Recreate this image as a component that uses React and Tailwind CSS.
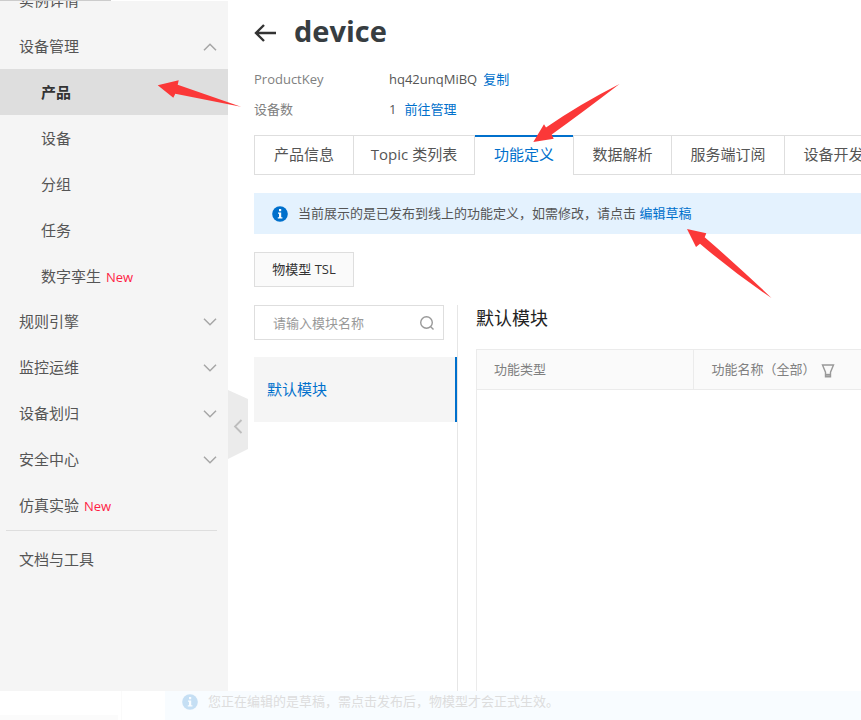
import React from "react";

function Chevron({ up = false }) {
  return (
    <svg className="h-2 w-[14px]" viewBox="0 0 14 8" fill="none" stroke="#a6a6a6" strokeWidth="1.5" aria-hidden="true">
      <path d={up ? "M1 7.2 7 1.2l6 6" : "M1 .8l6 6 6-6"} />
    </svg>
  );
}

function NewTag() {
  return <span className="ml-[5px] text-[13px] text-[#ff1e46]">New</span>;
}

function MenuRow({ label, isNew, expandable, open }) {
  return (
    <button type="button" className="flex h-[46px] w-full items-center justify-between pr-[11px] pb-px pl-[19px] text-left">
      <span>
        {label}
        {isNew && <NewTag />}
      </span>
      {expandable && <Chevron up={open} />}
    </button>
  );
}

function SubRow({ label, isNew, active }) {
  return (
    <a
      href="#"
      aria-current={active ? "page" : undefined}
      className={
        active
          ? "flex h-[46px] items-center bg-[#dedede] pl-[41px] font-bold text-[#333333]"
          : "flex h-[46px] items-center pl-[41px]"
      }
    >
      <span>
        {label}
        {isNew && <NewTag />}
      </span>
    </a>
  );
}

function Sidebar() {
  return (
    <aside className="relative w-[228px] shrink-0 bg-[#f5f5f5]">
      <div className="h-full overflow-hidden">
        <nav className="-mt-[23px] text-[15px] text-[#555555]">
          <MenuRow label="实例详情" />
          <MenuRow label="设备管理" expandable open />
          <div className="-mt-px">
            <SubRow label="产品" active />
            <SubRow label="设备" />
            <SubRow label="分组" />
            <SubRow label="任务" />
            <SubRow label="数字孪生" isNew />
          </div>
          <MenuRow label="规则引擎" expandable />
          <MenuRow label="监控运维" expandable />
          <MenuRow label="设备划归" expandable />
          <MenuRow label="安全中心" expandable />
          <MenuRow label="仿真实验" isNew />
          <hr className="mt-px mr-[11px] mb-[6px] ml-[6px] border-[#dedede]" />
          <MenuRow label="文档与工具" />
        </nav>
      </div>
      <button type="button" aria-label="收起菜单" className="absolute top-[389px] left-full">
        <svg className="h-[69px] w-5" viewBox="0 0 20 69" fill="none">
          <path d="M0 0 20 9v50L0 69z" fill="#ebebeb" />
          <path d="M13.5 30 7 36.5l6.500 6.500" stroke="#bdbdbd" strokeWidth="1.8" />
        </svg>
      </button>
    </aside>
  );
}

function InfoIcon() {
  return (
    <svg className="size-4 shrink-0" viewBox="0 0 16 16" aria-hidden="true">
      <circle cx="8" cy="8" r="7.800" fill="#0070cc" />
      <path d="M7 3h2.200v2.200H7zM6 6.500h3.200v4.700h1.200v1.300H5.800v-1.300H7V7.800H6z" fill="#fff" />
    </svg>
  );
}

const TAB = "h-10 shrink-0 border-y border-l border-[#dedede] pb-px text-[15px] text-[#555555]";

function Tabs() {
  return (
    <div role="tablist" className="mt-[11px] flex overflow-hidden">
      <button type="button" role="tab" className={TAB + " w-[99px]"}>产品信息</button>
      <button type="button" role="tab" className={TAB + " w-[122px] border-r"}>Topic 类列表</button>
      <button
        type="button"
        role="tab"
        aria-selected="true"
        className="h-10 w-[98px] shrink-0 border-t-2 border-[#0070cc] pb-[3px] text-[15px] text-[#0070cc]"
      >
        功能定义
      </button>
      <button type="button" role="tab" className={TAB + " w-[98px]"}>数据解析</button>
      <button type="button" role="tab" className={TAB + " w-[113px]"}>服务端订阅</button>
      <button type="button" role="tab" className={TAB + " w-[98px]"}>设备开发</button>
    </div>
  );
}

function ModulePanel() {
  return (
    <section className="w-[204px] shrink-0 border-r border-[#e6e6e6]">
      <label className="mr-[13px] flex h-[35px] items-center border border-[#dedede] pr-2 pl-[18px]">
        <span className="sr-only">模块名称</span>
        <input
          type="text"
          placeholder="请输入模块名称"
          className="h-full w-full min-w-0 text-[13px] outline-none placeholder:text-[#999999]"
        />
        <svg className="size-4 shrink-0" viewBox="0 0 16 16" fill="none" stroke="#999999" strokeWidth="1.400" aria-hidden="true">
          <circle cx="7.500" cy="7.500" r="5.800" />
          <path d="m11.700 11.700 2.800 2.800" />
        </svg>
      </label>
      <button
        type="button"
        className="mt-[17px] h-[65px] w-full border-r-2 border-[#0070cc] bg-[#f5f5f5] pl-[13px] text-left text-[15px] text-[#0070cc]"
      >
        默认模块
      </button>
    </section>
  );
}

function FunctionPanel() {
  return (
    <section className="flex min-w-0 flex-1 flex-col pl-[18px]">
      <h2 className="mb-[18px] text-[18px] leading-[26px] text-[#222222]">默认模块</h2>
      <div className="flex-1 border-l border-[#ebebeb]">
        <table className="w-full table-fixed border-y border-[#ebebeb] bg-[#fafafa] text-[13px] text-[#808080]">
          <thead>
            <tr className="h-10">
              <th scope="col" className="w-[216px] border-r border-[#ebebeb] pl-[17px] text-left font-normal">功能类型</th>
              <th scope="col" className="pl-[18px] text-left font-normal">
                <span className="flex items-center gap-[5px] whitespace-nowrap">
                  功能名称（全部）
                  <button type="button" aria-label="筛选">
                    <svg className="mt-[2px] h-4 w-[14px]" viewBox="0 0 14 16" fill="none" stroke="#999999" strokeWidth="1.400">
                      <path d="M1.500 2h11L9.500 9.200v4.600h-5V9.200z" />
                      <path d="M4.500 11.800h5" strokeWidth="2" />
                    </svg>
                  </button>
                </span>
              </th>
            </tr>
          </thead>
        </table>
      </div>
    </section>
  );
}

function PointerArrows() {
  return (
    <svg className="pointer-events-none absolute top-0 left-0 h-[720px] w-[861px]" viewBox="0 0 861 720" fill="#fb3838" aria-hidden="true">
      <path d="M157.700 85.300 178.700 80.300 177.700 84.700 241 106.700 175.300 93.700 173.300 97.700z" />
      <path d="M533.300 142 544 124.300 546 127.500Q580 104 619.500 84 583 112 551.700 134.500L553.700 138.700z" />
      <path d="M687 229 706.300 233.300 704.700 237.300Q738 266 771.500 298 733 272 700 243.700L696 247z" />
    </svg>
  );
}

export default function App() {
  return (
    <div className="relative flex min-h-screen flex-col overflow-hidden bg-white font-['Open_Sans','Noto_Sans_CJK_SC',sans-serif]">
      <div className="h-px w-[111px] bg-[#cccccc]" />
      <div className="flex flex-1">
        <Sidebar />
        <main className="flex min-w-0 flex-1 flex-col pl-[26px]">
          <header className="mt-[10px] flex h-10 items-center gap-[18px]">
            <button type="button" aria-label="返回">
              <svg className="mt-1 h-5 w-[22px]" viewBox="0 0 22 20" fill="none" stroke="#333333" strokeWidth="2.400">
                <path d="M22 10H2M10 2 2 10l8 8" />
              </svg>
            </button>
            <h1 className="text-[29px] font-bold text-[#373d41]">device</h1>
          </header>
          <dl className="mt-[13px] grid grid-cols-[135px_1fr] text-[13px] leading-[30px] text-[#555555]">
            <dt className="text-[#808080]">ProductKey</dt>
            <dd>
              hq42unqMiBQ
              <button type="button" className="ml-[6px] text-[#0070cc]">复制</button>
            </dd>
            <dt className="text-[#808080]">设备数</dt>
            <dd>
              1
              <a href="#" className="ml-2 text-[#0070cc]">前往管理</a>
            </dd>
          </dl>
          <Tabs />
          <div className="mt-[18px] flex h-[41px] items-center bg-[#e4f2fe] pl-[18px] text-[13px] whitespace-nowrap text-[#555555]">
            <InfoIcon />
            <p className="ml-[10px]">
              当前展示的是已发布到线上的功能定义，如需修改，请点击{" "}
              <a href="#" className="text-[#0070cc]">编辑草稿</a>
            </p>
          </div>
          <button
            type="button"
            className="mt-[18px] h-[35px] w-[100px] border border-[#dedede] bg-[#fafafa] text-[13px] text-[#333333]"
          >
            物模型 TSL
          </button>
          <div className="mt-[18px] flex flex-1">
            <ModulePanel />
            <FunctionPanel />
          </div>
        </main>
      </div>
      <footer className="flex h-[29px]">
        <div className="flex w-[122px] flex-col justify-end border-r border-[#fafafa]">
          <div className="mr-[3px] h-[5px] bg-[#fbfbfb]" />
        </div>
        <div className="ml-[43px] flex flex-1 items-center bg-[#f8fcff] pb-[7px] pl-[17px] text-[13px] text-[#dddddd]">
          <span className="flex opacity-20">
            <InfoIcon />
          </span>
          <p className="ml-[10px]">您正在编辑的是草稿，需点击发布后，物模型才会正式生效。</p>
        </div>
      </footer>
      <PointerArrows />
    </div>
  );
}
